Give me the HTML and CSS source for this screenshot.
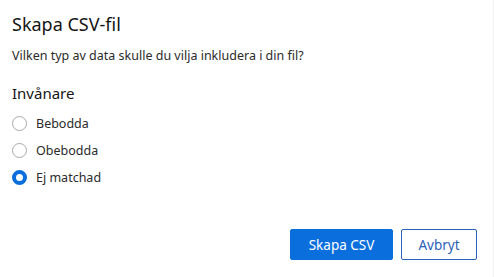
FILE: index.html
```html
<!DOCTYPE html>
<html lang="sv">
<head>
<meta charset="utf-8">
<link rel="stylesheet" href="styles.css">
</head>
<body>
<div class="dialog">
  <h1 class="title">Skapa CSV-fil</h1>
  <p class="desc">Vilken typ av data skulle du vilja inkludera i din fil?</p>
  <div class="group">
    <div class="group-label">Invånare</div>
    <label class="opt"><span class="radio"></span><span>Bebodda</span></label>
    <label class="opt"><span class="radio"></span><span>Obebodda</span></label>
    <label class="opt"><span class="radio checked"></span><span>Ej matchad</span></label>
  </div>
  <div class="footer">
    <button class="btn primary">Skapa CSV</button>
    <button class="btn secondary">Avbryt</button>
  </div>
</div>
</body>
</html>
```
FILE: styles.css
```css
* { box-sizing: border-box; }
html, body { margin: 0; padding: 0; background: #fff; }
body { font-family: "Noto Sans", "Open Sans", sans-serif; color: #151515; }
.dialog {
  width: 494px; height: 277px;
  padding: 12px 16px 17px 12px;
  display: flex; flex-direction: column;
  border-right: 1px solid #eeeeee;
}
.title { margin: 0; font-size: 18px; font-weight: 400; line-height: 24px; color: #151515; }
.desc { margin: 11px 0 0; font-size: 12.5px; line-height: 18px; color: #2b2b2b; }
.group { margin-top: 18px; display: flex; flex-direction: column; }
.group-label { font-size: 15px; line-height: 20px; color: #151515; margin-bottom: 7px; }
.opt { display: flex; align-items: center; gap: 9px; height: 27px; font-size: 12.5px; color: #2b2b2b; }
.radio {
  width: 15px; height: 15px; border-radius: 50%;
  border: 1px solid #a9a9a9; background: #fff; flex: none;
}
.radio.checked { border: 4px solid #0a6fdd; }
.footer { margin-top: auto; display: flex; justify-content: flex-end; gap: 8px; }
.btn {
  height: 31px; font-family: inherit; font-size: 13.5px; border-radius: 2px; cursor: pointer;
}
.primary { width: 103px; background: #0a6fdd; color: #fff; border: 1px solid #0a6fdd; }
.secondary { width: 76px; background: #fff; color: #2a62b8; border: 1px solid #2a62b8; }
```
